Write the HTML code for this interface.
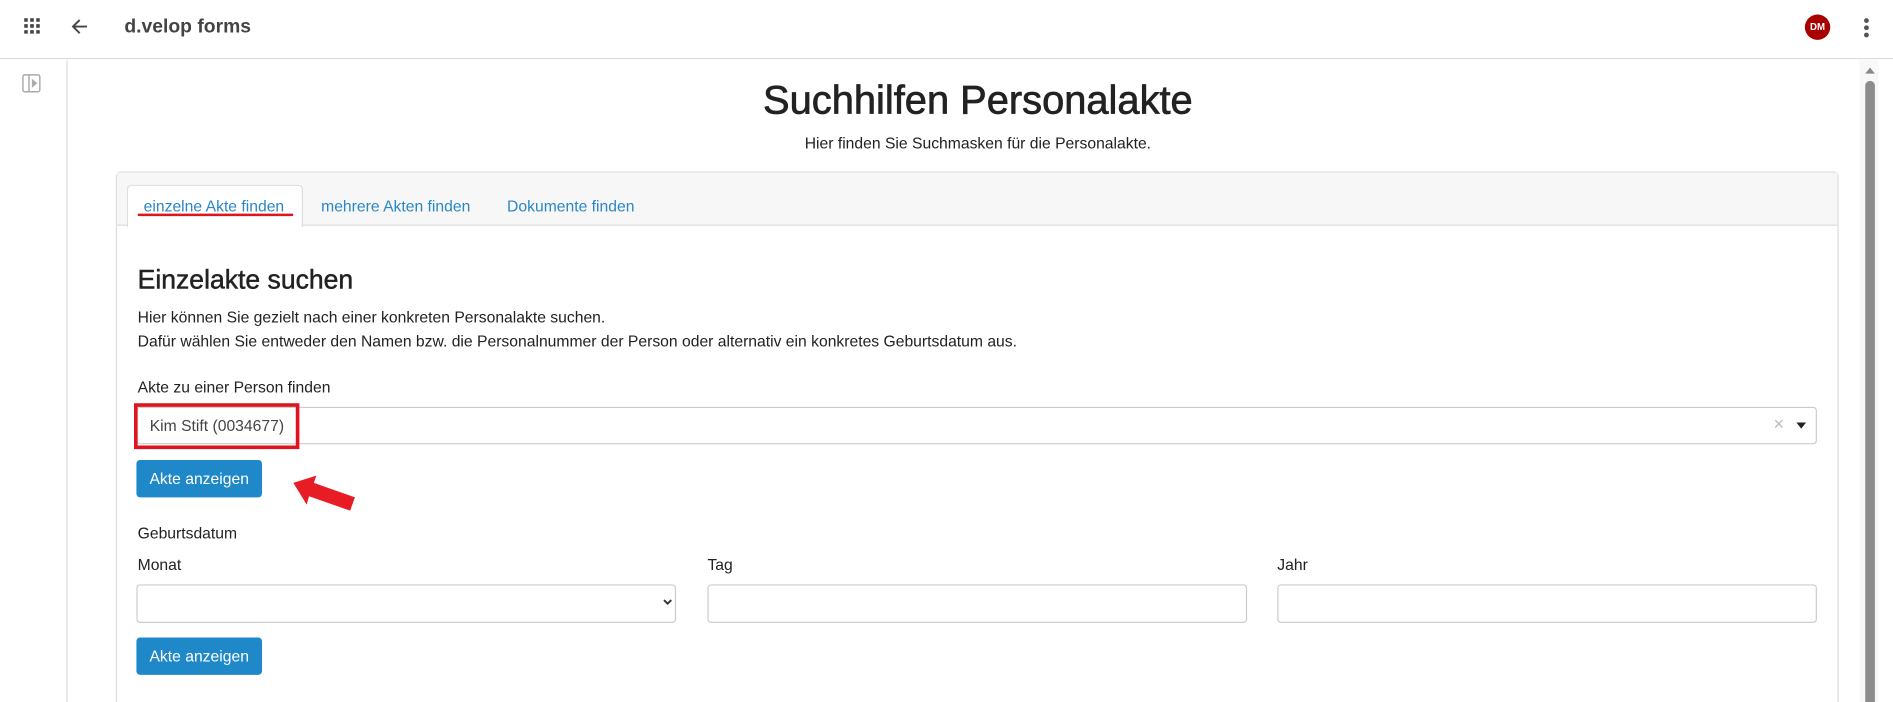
<!DOCTYPE html>
<html><head><meta charset="utf-8"><style>
*{box-sizing:border-box;margin:0;padding:0}
html,body{width:1893px;height:702px;overflow:hidden;background:#fff}
#clip{position:relative;width:1893px;height:702px;overflow:hidden}
#w{position:absolute;left:0;top:0;width:1568px;height:582px;overflow:hidden;transform:scale(1.20727);transform-origin:0 0;font-family:"Liberation Sans",sans-serif;color:#222;font-size:13px}
.a{position:absolute}
.t{position:absolute;white-space:nowrap;line-height:1}
.btn{position:absolute;background:#1e88c8;color:#fff;border-radius:3px;width:104px;height:31px;text-align:center;line-height:31px;font-size:13px}
.inp{position:absolute;border:1px solid #ccc;border-radius:3px;height:32px;background:#fff}
</style></head><body><div id="clip"><div id="w">
<div class="a" style="left:0;top:0;width:1568px;height:49px;border-bottom:1px solid #ddd"></div>
<svg class="a" style="left:20px;top:15px" width="13" height="13" viewBox="0 0 13 13" fill="#444"><rect x="0" y="0" width="3" height="3"/><rect x="5" y="0" width="3" height="3"/><rect x="10" y="0" width="3" height="3"/><rect x="0" y="5" width="3" height="3"/><rect x="5" y="5" width="3" height="3"/><rect x="10" y="5" width="3" height="3"/><rect x="0" y="10" width="3" height="3"/><rect x="5" y="10" width="3" height="3"/><rect x="10" y="10" width="3" height="3"/></svg>
<svg class="a" style="left:59px;top:15px" width="14" height="14" viewBox="0 0 14 14" fill="none" stroke="#444" stroke-width="1.6"><path d="M13 7H2M7 1.5L1.5 7 7 12.5"/></svg>
<div class="t" style="left:103px;top:15px;font-size:16px;color:#444;font-weight:bold">d.velop forms</div>
<div class="a" style="left:1495px;top:12px;width:21px;height:21px;border-radius:50%;background:#a80000;color:#fff;font-size:8px;font-weight:bold;text-align:center;line-height:21px">DM</div>
<div class="a" style="left:1544px;top:15px;width:4px;height:4px;border-radius:50%;background:#555;box-shadow:0 6px 0 #555,0 12px 0 #555"></div>
<div class="a" style="left:0;top:50px;width:56px;height:532px;border-right:1px solid #ddd"></div>
<svg class="a" style="left:18px;top:61px" width="16" height="16" viewBox="0 0 16 16" fill="none" stroke="#aaa" stroke-width="1.2"><rect x="1" y="1" width="14" height="14" rx="1.5"/><path d="M6 1v14"/><path d="M9 5.5l3 2.5-3 2.5z" fill="#aaa"/></svg>
<div class="a" style="left:1540px;top:50px;width:16px;height:532px;background:#f8f8f8"></div>
<div class="a" style="left:1545px;top:56px;width:0;height:0;border-left:4px solid transparent;border-right:4px solid transparent;border-bottom:5px solid #888"></div>
<div class="a" style="left:1545px;top:67px;width:8px;height:530px;border-radius:4px;background:#8c8c8c"></div>
<div class="t" style="left:0;width:1620px;text-align:center;top:66px;font-size:33px;color:#222;-webkit-text-stroke:0.6px #222">Suchhilfen Personalakte</div>
<div class="t" style="left:0;width:1620px;text-align:center;top:112px;font-size:13px">Hier finden Sie Suchmasken für die Personalakte.</div>
<div class="a" style="left:96px;top:142px;width:1427px;height:460px;border:1px solid #ddd;border-radius:4px"></div>
<div class="a" style="left:97px;top:143px;width:1425px;height:44px;background:#f7f7f7;border-bottom:1px solid #ddd"></div>
<div class="a" style="left:105px;top:153px;width:146px;height:35px;background:#fff;border:1px solid #ddd;border-bottom:none;border-radius:4px 4px 0 0"></div>
<div class="t" style="left:119px;top:164px;color:#2a87c6">einzelne Akte finden</div>
<div class="a" style="left:114px;top:177px;width:129px;height:2px;background:#e0141e;border-radius:1px"></div>
<div class="t" style="left:266px;top:164px;color:#2a87c6">mehrere Akten finden</div>
<div class="t" style="left:420px;top:164px;color:#2a87c6">Dokumente finden</div>
<div class="t" style="left:114px;top:221px;font-size:22px;-webkit-text-stroke:0.4px #222">Einzelakte suchen</div>
<div class="t" style="left:114px;top:256px">Hier können Sie gezielt nach einer konkreten Personalakte suchen.</div>
<div class="t" style="left:114px;top:276px">Dafür wählen Sie entweder den Namen bzw. die Personalnummer der Person oder alternativ ein konkretes Geburtsdatum aus.</div>
<div class="t" style="left:114px;top:314px">Akte zu einer Person finden</div>
<div class="inp" style="left:113px;top:337px;width:1392px;height:31px"></div>
<div class="a" style="left:111px;top:334px;width:137px;height:38px;border:3px solid #e0141e"></div>
<div class="t" style="left:124px;top:346px;color:#444">Kim Stift (0034677)</div>
<div class="t" style="left:1469px;top:344px;color:#bbb;font-size:15px">×</div>
<div class="a" style="left:1488px;top:350px;width:0;height:0;border-left:4px solid transparent;border-right:4px solid transparent;border-top:5px solid #222"></div>
<div class="btn" style="left:113px;top:381px">Akte anzeigen</div>
<svg class="a" style="left:240px;top:392px" width="56" height="34" viewBox="0 0 56 34"><path d="M3 8L22 2 20 8 54 20 50 31 16 19 14 26z" fill="#e81c24"/></svg>
<div class="t" style="left:114px;top:435px">Geburtsdatum</div>
<div class="t" style="left:114px;top:461px">Monat</div>
<div class="t" style="left:586px;top:461px">Tag</div>
<div class="t" style="left:1058px;top:461px">Jahr</div>
<div class="inp" style="left:113px;top:484px;width:447px"></div>
<svg class="a" style="left:549px;top:496px" width="8" height="6" viewBox="0 0 8 6" fill="none" stroke="#333" stroke-width="1.6"><path d="M1 1l3 3 3-3"/></svg>
<div class="inp" style="left:586px;top:484px;width:447px"></div>
<div class="inp" style="left:1058px;top:484px;width:447px"></div>
<div class="btn" style="left:113px;top:528px">Akte anzeigen</div>
</div></div></body></html>
